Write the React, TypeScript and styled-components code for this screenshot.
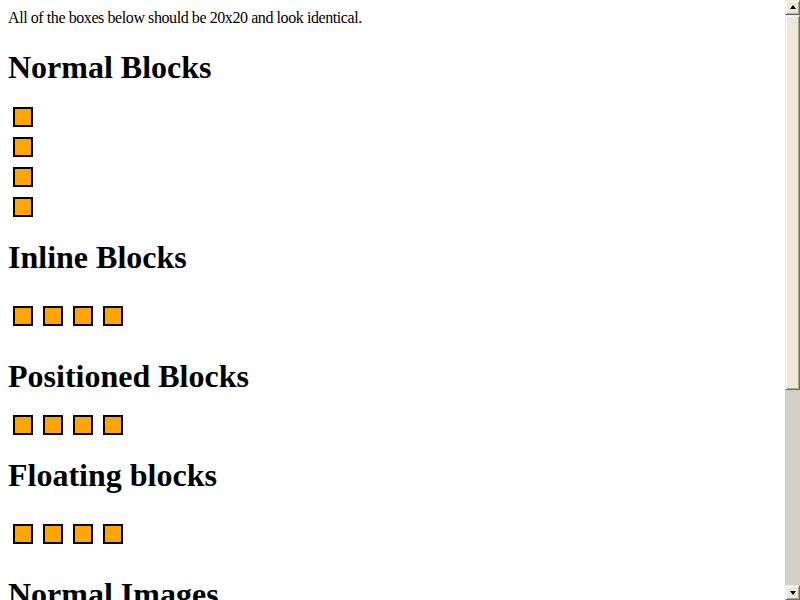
import React from 'react';
import styled, { createGlobalStyle } from 'styled-components';

const GlobalStyle = createGlobalStyle`
  html, body {
    margin: 0;
    padding: 0;
    background: #ffffff;
  }
`;

const Window = styled.div`
  display: flex;
  width: 800px;
  height: 600px;
  overflow: hidden;
  background: #ffffff;
`;

const Content = styled.div`
  flex: 1;
  padding: 8px;
  overflow: hidden;
  font-family: 'Liberation Serif', 'Times New Roman', serif;
  color: #000000;
`;

const Intro = styled.div`
  font-size: 16px;
  line-height: 19px;
  letter-spacing: -0.42px;
  white-space: nowrap;
`;

const Heading = styled.h1`
  margin: 22px 0 21px;
  font-size: 32px;
  line-height: 36px;
  font-weight: bold;
  white-space: nowrap;
`;

const BoxGroup = styled.div<{ $row?: boolean; $pad?: number }>`
  display: flex;
  flex-direction: ${(p) => (p.$row ? 'row' : 'column')};
  gap: 10px;
  padding: ${(p) => p.$pad ?? 0}px 0 ${(p) => (p.$row ? p.$pad ?? 0 : 0)}px 5px;
`;

const Box = styled.div`
  box-sizing: border-box;
  width: 20px;
  height: 20px;
  border: 2px solid #000000;
  background: #ffa500;
`;

const ScrollBar = styled.div`
  display: flex;
  flex-direction: column;
  width: 15px;
  height: 600px;
  background: #d4d0c8;
`;

const raised = `
  box-sizing: border-box;
  background: #ece9d8;
  border: 1px solid;
  border-color: #ece9d8 #716f64 #716f64 #ece9d8;
  box-shadow: inset 1px 1px #ffffff, inset -1px -1px #aca899;
`;

const ScrollButton = styled.div`
  ${raised}
  display: flex;
  align-items: center;
  justify-content: center;
  width: 15px;
  height: 15px;
`;

const Arrow = styled.span<{ $down?: boolean }>`
  width: 0;
  height: 0;
  border-left: 3.5px solid transparent;
  border-right: 3.5px solid transparent;
  ${(p) =>
    p.$down
      ? 'border-top: 4px solid #000000; margin-top: 1px;'
      : 'border-bottom: 4px solid #000000; margin-top: -1px;'}
`;

const Thumb = styled.div`
  ${raised}
  width: 15px;
  height: 375px;
`;

const Track = styled.div`
  flex: 1;
`;

const BoxRow = ({ row, pad }: { row?: boolean; pad?: number }) => (
  <BoxGroup $row={row} $pad={pad}>
    {[0, 1, 2, 3].map((i) => (
      <Box key={i} />
    ))}
  </BoxGroup>
);

export default function App() {
  return (
    <>
      <GlobalStyle />
      <Window>
        <Content>
          <Intro>All of the boxes below should be 20x20 and look identical.</Intro>
          <Heading>Normal Blocks</Heading>
          <BoxRow pad={1} />
          <Heading>Inline Blocks</Heading>
          <BoxRow row pad={10} />
          <Heading>Positioned Blocks</Heading>
          <BoxRow row pad={0} />
          <Heading>Floating blocks</Heading>
          <BoxRow row pad={10} />
          <Heading>Normal Images</Heading>
        </Content>
        <ScrollBar>
          <ScrollButton>
            <Arrow />
          </ScrollButton>
          <Thumb />
          <Track />
          <ScrollButton>
            <Arrow $down />
          </ScrollButton>
        </ScrollBar>
      </Window>
    </>
  );
}
